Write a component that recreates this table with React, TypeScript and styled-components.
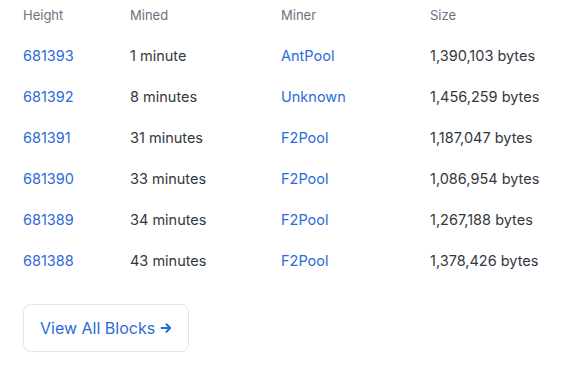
import styled, { createGlobalStyle } from 'styled-components'

const GlobalStyle = createGlobalStyle`
  body {
    margin: 0;
    background: #ffffff;
    font-family: Inter, 'Noto Sans', sans-serif;
  }
`

const Page = styled.main`
  padding: 0 23px;
  width: 587px;
  box-sizing: border-box;
`

const Table = styled.div`
  display: grid;
  grid-template-columns: 107px 151px 149px 1fr;
`

const HeadCell = styled.div`
  height: 30px;
  margin-bottom: 5px;
  display: flex;
  align-items: center;
  font-size: 13px;
  color: #6b7280;
`

const Cell = styled.div<{ $link?: boolean }>`
  height: 41px;
  display: flex;
  align-items: center;
  font-size: 14.5px;
  color: ${p => (p.$link ? '#2c6bd8' : '#333840')};
`

const Footer = styled.div`
  padding: 23px 0 20px;
`

const Button = styled.button`
  display: inline-flex;
  align-items: center;
  gap: 5px;
  height: 48px;
  padding: 0 16px;
  border: 1px solid #e3e5e8;
  border-radius: 8px;
  background: #ffffff;
  color: #2c6bd8;
  font-family: Inter, 'Noto Sans', sans-serif;
  font-size: 16px;
  cursor: pointer;
`

const rows = [
  { height: '681393', mined: '1 minute', miner: 'AntPool', size: '1,390,103 bytes' },
  { height: '681392', mined: '8 minutes', miner: 'Unknown', size: '1,456,259 bytes' },
  { height: '681391', mined: '31 minutes', miner: 'F2Pool', size: '1,187,047 bytes' },
  { height: '681390', mined: '33 minutes', miner: 'F2Pool', size: '1,086,954 bytes' },
  { height: '681389', mined: '34 minutes', miner: 'F2Pool', size: '1,267,188 bytes' },
  { height: '681388', mined: '43 minutes', miner: 'F2Pool', size: '1,378,426 bytes' },
]

const Arrow = () => (
  <svg width="12" height="12" viewBox="0 0 12 12" fill="none">
    <path d="M1.5 6h8.5M6.5 2.2L10.2 6 6.5 9.8" stroke="#2c6bd8" strokeWidth="2" strokeLinecap="round" strokeLinejoin="round" />
  </svg>
)

const App = () => (
  <>
    <GlobalStyle />
    <Page>
      <Table>
        <HeadCell>Height</HeadCell>
        <HeadCell>Mined</HeadCell>
        <HeadCell>Miner</HeadCell>
        <HeadCell>Size</HeadCell>
        {rows.map(r => (
          <>
            <Cell key={r.height + 'h'} $link>{r.height}</Cell>
            <Cell key={r.height + 'm'}>{r.mined}</Cell>
            <Cell key={r.height + 'p'} $link>{r.miner}</Cell>
            <Cell key={r.height + 's'}>{r.size}</Cell>
          </>
        ))}
      </Table>
      <Footer>
        <Button>
          View All Blocks <Arrow />
        </Button>
      </Footer>
    </Page>
  </>
)

export default App
